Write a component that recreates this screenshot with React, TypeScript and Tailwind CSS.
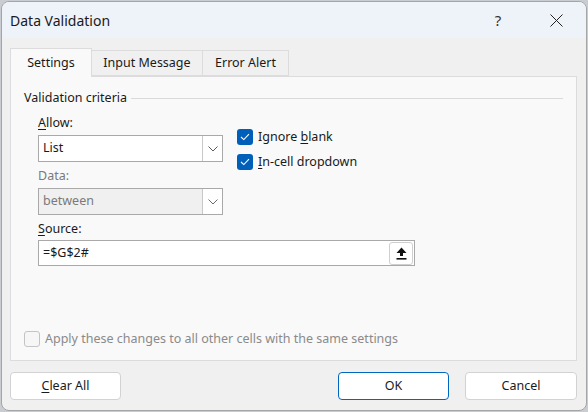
import type { ReactNode } from 'react';

const font = { fontFamily: '"Noto Sans", "Segoe UI", Arial, sans-serif' };

function Chevron({ muted }: { muted?: boolean }) {
  return (
    <svg width="10" height="6" viewBox="0 0 10 6" className={muted ? 'text-[#6b6b6b]' : 'text-[#5a5a5a]'}>
      <path d="M0.5 0.5 L5 5 L9.5 0.5" fill="none" stroke="currentColor" strokeWidth="1" />
    </svg>
  );
}

function Combo({ value, disabled }: { value: string; disabled?: boolean }) {
  return (
    <div className={`flex h-[27px] w-[185px] border border-[#a9a9a9] ${disabled ? 'bg-[#f0f0f0] text-[#7a7a7a]' : 'bg-white text-[#1a1a1a]'}`}>
      <div className="flex flex-1 items-center pl-[4px] text-[12.5px]">{value}</div>
      <div className="flex w-[20px] items-center justify-center border-l border-[#c8c8c8] bg-white">
        <Chevron muted={disabled} />
      </div>
    </div>
  );
}

function Check({ checked, disabled, children }: { checked?: boolean; disabled?: boolean; children: ReactNode }) {
  return (
    <div className="flex h-[16px] items-center gap-[5px]">
      {checked ? (
        <div className="flex h-[16px] w-[16px] items-center justify-center rounded-[3px] bg-[#005fb8]">
          <svg width="10" height="8" viewBox="0 0 10 8">
            <path d="M1 4 L3.8 6.6 L9 1.2" fill="none" stroke="white" strokeWidth="1.1" />
          </svg>
        </div>
      ) : (
        <div className="h-[16px] w-[16px] rounded-[3px] border border-[#c4c4c4] bg-[#f6f6f6]" />
      )}
      <span className={`text-[12.5px] ${disabled ? 'text-[#8a8a8a]' : 'text-[#1a1a1a]'}`}>{children}</span>
    </div>
  );
}

function Btn({ children, primary, wide }: { children: ReactNode; primary?: boolean; wide?: boolean }) {
  return (
    <div
      className={`flex h-[28px] items-center justify-center rounded-[4px] border bg-white text-[12.5px] text-[#1a1a1a] ${
        wide ? 'w-[112px]' : 'w-[111px]'
      } ${primary ? 'border-[#0067c0]' : 'border-[#d2d2d2]'}`}
    >
      {children}
    </div>
  );
}

export default function App() {
  return (
    <div className="h-[412px] w-[588px] overflow-hidden bg-[#c9ccd1] pl-px pt-px" style={font}>
      <div className="flex h-[410px] w-[586px] flex-col overflow-hidden rounded-[8px] border border-[#a5a5a5] bg-[#f0f0f0]">
        {/* title bar */}
        <div className="flex h-[36px] items-center bg-[#eef2f9] pl-[8px]">
          <span className="flex-1 text-[14px] text-[#1a1a1a]">Data Validation</span>
          <div className="flex w-[46px] items-center justify-center text-[15px] text-[#333]">?</div>
          <div className="flex w-[12px]" />
          <div className="mr-[7px] flex w-[46px] items-center justify-center">
            <svg width="13" height="13" viewBox="0 0 13 13">
              <path d="M0.5 0.5 L12.5 12.5 M12.5 0.5 L0.5 12.5" stroke="#222" strokeWidth="1" />
            </svg>
          </div>
        </div>

        <div className="flex flex-1 flex-col pl-[8px] pr-[9px] pb-[8px]">
          {/* tabs */}
          <div className="mt-[10px] flex h-[28px] items-end">
            <div className="relative z-10 -mb-px flex h-[29px] w-[82px] items-center justify-center border border-b-0 border-[#dcdcdc] bg-[#f9f9f9] text-[12.5px] text-[#1a1a1a]">
              Settings
            </div>
            <div className="flex h-[26px] w-[111px] items-center justify-center border border-l-0 border-[#dcdcdc] bg-[#f0f0f0] text-[12.5px] text-[#1a1a1a]">
              Input Message
            </div>
            <div className="flex h-[26px] w-[86px] items-center justify-center border border-l-0 border-[#dcdcdc] bg-[#f0f0f0] text-[12.5px] text-[#1a1a1a]">
              Error Alert
            </div>
          </div>

          {/* panel */}
          <div className="flex h-[285px] flex-col border border-[#dcdcdc] bg-[#f9f9f9] px-[13px] pt-[12px] pb-[13px]">
            <div className="flex h-[18px] items-center gap-[4px]">
              <span className="text-[12.5px] text-[#1a1a1a]">Validation criteria</span>
              <div className="h-px flex-1 bg-[#dadada]" />
            </div>

            <div className="pl-[14px]">
              <div className="flex">
                <div className="flex w-[185px] flex-col">
                  <div className="mt-[8px] flex h-[16px] items-center text-[12.5px] text-[#1a1a1a]">
                    <span><u className="underline-offset-2">A</u>llow:</span>
                  </div>
                  <div className="mt-[4px]">
                    <Combo value="List" />
                  </div>
                  <div className="mt-[6px] flex h-[16px] items-center text-[12.5px] text-[#7a7a7a]">Data:</div>
                  <div className="mt-[4px]">
                    <Combo value="between" disabled />
                  </div>
                </div>
                <div className="ml-[14px] mt-[22px] flex flex-col gap-[9px]">
                  <Check checked>
                    Ignore <u className="underline-offset-2">b</u>lank
                  </Check>
                  <Check checked>
                    <u className="underline-offset-2">I</u>n-cell dropdown
                  </Check>
                </div>
              </div>

              <div className="mt-[6px] flex h-[16px] items-center text-[12.5px] text-[#1a1a1a]">
                <span><u className="underline-offset-2">S</u>ource:</span>
              </div>
              <div className="mt-[3px] flex h-[26px] w-[377px] items-center border border-[#a9a9a9] bg-white pr-px">
                <span className="flex-1 pl-[4px] text-[12.5px] text-[#1a1a1a]">=$G$2#</span>
                <div className="flex h-[23px] w-[24px] items-center justify-center rounded-[3px] border border-[#cfcfcf] bg-white">
                  <svg width="11" height="13" viewBox="0 0 11 13">
                    <path d="M5.5 0.5 L10.5 6 L7 6 L7 9 L4 9 L4 6 L0.5 6 Z" fill="#111" />
                    <rect x="0.5" y="11" width="10" height="1.6" fill="#111" />
                  </svg>
                </div>
              </div>
            </div>

            <div className="mt-auto">
              <Check disabled>Apply these changes to all other cells with the same settings</Check>
            </div>
          </div>

          {/* buttons */}
          <div className="mt-[11px] flex">
            <Btn>
              <span><u className="underline-offset-2">C</u>lear All</span>
            </Btn>
            <div className="flex-1" />
            <Btn primary>OK</Btn>
            <div className="w-[16px]" />
            <Btn wide>Cancel</Btn>
          </div>
        </div>
      </div>
    </div>
  );
}
